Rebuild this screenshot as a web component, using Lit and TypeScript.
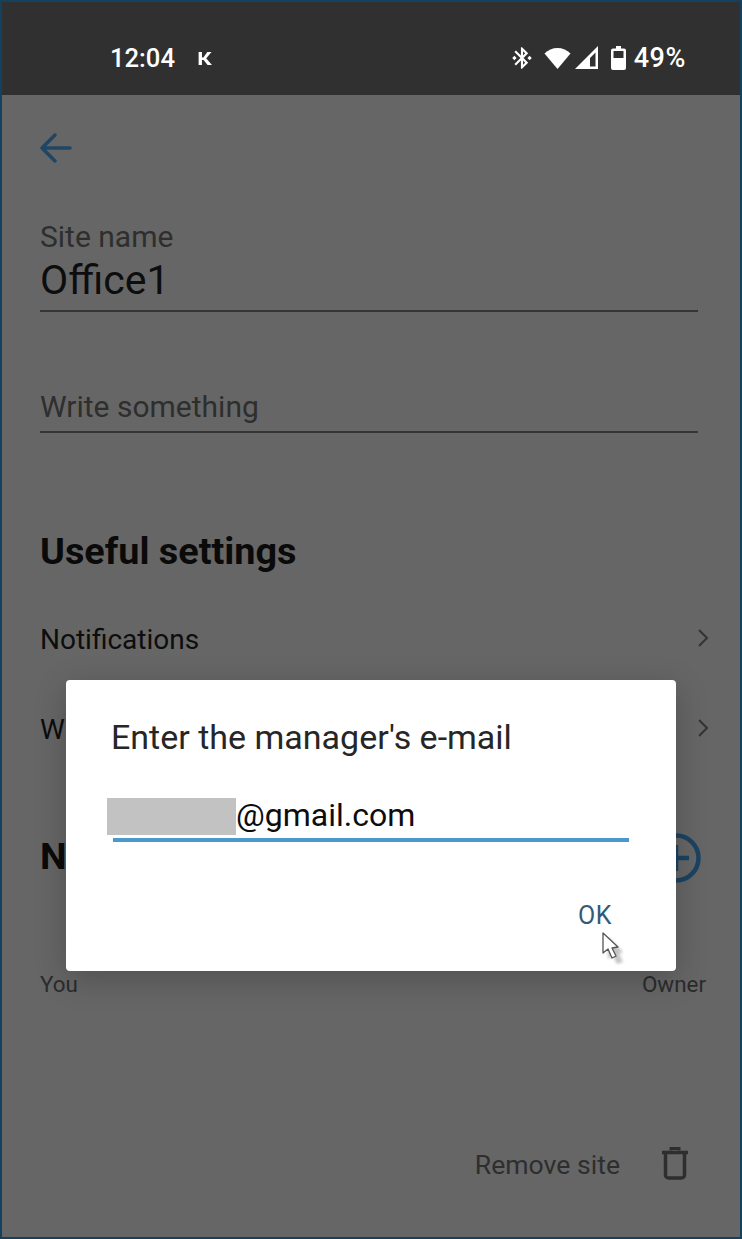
import { LitElement, html, css } from "lit";
import { customElement } from "lit/decorators.js";

@customElement("app-root")
export class AppRoot extends LitElement {
  static styles = css`
    :host {
      display: block;
      position: relative;
      width: 742px;
      height: 1239px;
      box-sizing: border-box;
      border: 2px solid #15405e;
      background: #666666;
      font-family: Roboto, "Liberation Sans", sans-serif;
      color: #0a0a0a;
      overflow: hidden;
    }
    .status {
      height: 93px;
      background: #303030;
      color: #fff;
      display: flex;
      align-items: center;
      padding: 19px 54px 0 108px;
      box-sizing: border-box;
    }
    .time { font-size: 25.6px; font-weight: 500; }
    .k {
      display: inline-block;
      font-size: 23px;
      font-weight: 500;
      margin-left: 23px;
      line-height: 26px;
      transform: scaleX(1.2);
    }
    .right { margin-left: auto; display: flex; align-items: center; }
    .pct { font-size: 27px; font-weight: 500; margin-left: 8px; letter-spacing: 0.6px; }
    .right svg { display: block; fill: #fff; }
    .bt { width: 26px; height: 26px; }
    .wifi { margin-left: 9px; }
    .signal { margin-left: 4px; }
    .battery { margin-left: 12px; }
    .page { padding: 0 38px; display: flex; flex-direction: column; }
    .back { margin-top: 37px; height: 36px; color: #1f4765; }
    .back svg { display: block; }
    .label { margin-top: 53px; font-size: 30px; line-height: 32px; color: #2e2e2e; }
    .value { font-size: 41px; line-height: 54px; padding-bottom: 3px; color: #0d0d0d; }
    .line { height: 2px; background: #353535; margin-right: 4px; }
    .placeholder { margin-top: 71px; padding-bottom: 1px; font-size: 30px; line-height: 47px; color: #2e2e2e; }
    h2 { margin: 97px 0 0; font-size: 37.8px; line-height: 42px; font-weight: 700; color: #0a0a0a; }
    .row {
      display: flex;
      align-items: center;
      justify-content: space-between;
      font-size: 28px;
      line-height: 34px;
      color: #0d0d0d;
      margin-right: -7px;
    }
    .row svg { display: block; margin-bottom: 4px; }
    .r1 { margin-top: 51px; }
    .r2 { margin-top: 56px; }
    .n {
      margin-top: 88px;
      display: flex;
      justify-content: space-between;
      align-items: center;
      height: 42px;
      font-size: 37.8px;
      font-weight: 700;
    }
    .n svg { display: block; margin: 4px 1px 0 0; }
    .owner {
      margin-top: 94px;
      display: flex;
      justify-content: space-between;
      font-size: 22.4px;
      line-height: 26px;
      color: #2b2b2b;
      margin-right: -4px;
    }
    .remove {
      margin-top: 150px;
      display: flex;
      justify-content: flex-end;
      align-items: center;
      font-size: 26.6px;
      color: #2e2e2e;
      gap: 42px;
      margin-right: 14px;
    }
    .remove svg { display: block; margin-bottom: 2px; }
    .dialog {
      position: absolute;
      left: 64px;
      top: 678px;
      width: 610px;
      height: 291px;
      background: #fff;
      border-radius: 4px;
      box-shadow: 0 8px 32px rgba(0, 0, 0, 0.22);
      box-sizing: border-box;
      padding: 36px 47px 0 45px;
      display: flex;
      flex-direction: column;
    }
    .title { font-size: 34px; line-height: 42px; color: #262626; }
    .field { margin-top: 36px; margin-left: -4px; display: flex; align-items: center; height: 42px; font-size: 32px; color: #0d0d0d; }
    .mask { width: 129px; height: 37px; background: #c2c2c2; margin-top: 2px; }
    .underline { height: 4px; background: #4a98cc; margin: 2px 0 0 2px; }
    .ok { margin-top: 59px; align-self: flex-end; margin-right: 17px; font-size: 25px; line-height: 30px; color: #345a75; letter-spacing: 0.5px; }
    .cursor { position: absolute; left: 597px; top: 927px; display: block; }
    .cursor-shadow { filter: blur(1.5px); }
  `;

  render() {
    return html`
      <div class="status">
        <span class="time">12:04</span><span class="k">к</span>
        <div class="right">
          <svg class="bt" viewBox="0 0 24 24"><path d="M7 12l-2-2-2 2 2 2 2-2zm10.71-4.29L12 2h-1v7.59L6.41 5 5 6.41 10.59 12 5 17.59 6.41 19 11 14.41V22h1l5.71-5.71-4.3-4.29 4.3-4.29zM13 5.830l1.880 1.880L13 9.590V5.830zm1.880 10.460L13 18.170v-3.760l1.880 1.880zM19 10l-2 2 2 2 2-2-2-2z"/></svg>
          <svg class="wifi" width="27" height="22" viewBox="0 0 27 22"><path d="M13.500 22 0.500 6.500C4 3 8.500 1 13.500 1s9.500 2 13 5.500z"/></svg>
          <svg class="signal" width="24" height="24" viewBox="0 0 24 24"><path fill-rule="evenodd" d="M0 23 23 0v23zM15 20.500h5.500V6.500L15 12z"/></svg>
          <svg class="battery" width="15" height="24" viewBox="0 0 15 24"><path fill-rule="evenodd" d="M5 0h5v2.500h3a2 2 0 0 1 2 2V22a2 2 0 0 1-2 2H2a2 2 0 0 1-2-2V4.500a2 2 0 0 1 2-2h3zM2.500 5v7h10V5z"/></svg>
          <span class="pct">49%</span>
        </div>
      </div>
      <div class="page">
        <div class="back">
          <svg width="32" height="32" viewBox="0 0 32 32" fill="none" stroke="currentColor" stroke-width="3.500" stroke-linecap="round" stroke-linejoin="round"><path d="M30 16H2M15 3 2 16l13 13"/></svg>
        </div>
        <div class="label">Site name</div>
        <div class="value">Office1</div>
        <div class="line"></div>
        <div class="placeholder">Write something</div>
        <div class="line"></div>
        <h2>Useful settings</h2>
        <div class="row r1"><span>Notifications</span>
          <svg width="12" height="18" viewBox="0 0 12 18" fill="none" stroke="#333" stroke-width="2"><path d="M2 1l8 8-8 8"/></svg></div>
        <div class="row r2"><span>W</span>
          <svg width="12" height="18" viewBox="0 0 12 18" fill="none" stroke="#333" stroke-width="2"><path d="M2 1l8 8-8 8"/></svg></div>
        <div class="n"><span>N</span>
          <svg width="50" height="50" viewBox="0 0 50 50" fill="none" stroke="#1b4362" stroke-width="4.500"><circle cx="25" cy="25" r="22.500"/><path d="M12 25h26M25 12v26"/></svg></div>
        <div class="owner"><span>You</span><span>Owner</span></div>
        <div class="remove"><span>Remove site</span>
          <svg width="26" height="33" viewBox="0 0 26 33" fill="none" stroke="#2e2e2e"><path stroke-width="3.500" d="M0 5.500h26"/><path stroke-width="3" d="M9 3.500V1.500h8v2"/><path stroke-width="3.500" d="M3.500 6v22a3 3 0 0 0 3 3h13a3 3 0 0 0 3-3V6"/></svg></div>
      </div>
      <div class="dialog">
        <div class="title">Enter the manager's e-mail</div>
        <div class="field"><span class="mask"></span><span>@gmail.com</span></div>
        <div class="underline"></div>
        <div class="ok">OK</div>
      </div>
      <svg class="cursor" width="28" height="36" viewBox="0 0 28 36">
        <path class="cursor-shadow" d="M9 8l15 15-4 2 4 8-6 2-4-8-5 3z" fill="#c4c4c4"/>
        <path d="M4 4v20l5-4 4 9 4-2-4-8 6-1z" fill="#fff" stroke="#555" stroke-width="1.300" stroke-linejoin="round"/>
      </svg>
    `;
  }
}
